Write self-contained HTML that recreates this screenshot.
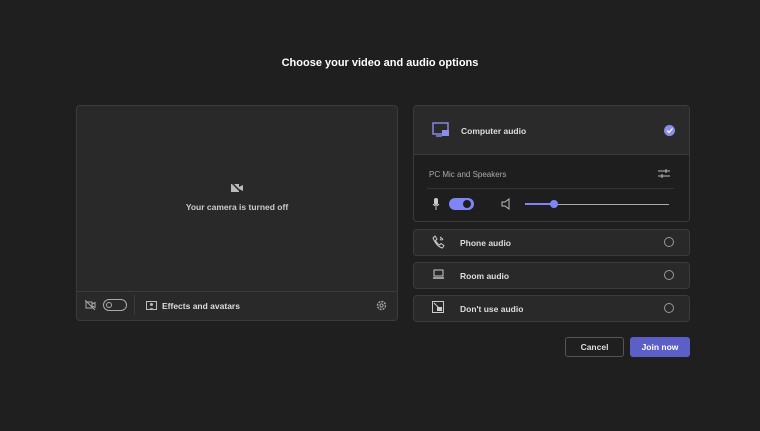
<!DOCTYPE html>
<html><head><style>
*{margin:0;padding:0;box-sizing:border-box}
body{width:760px;height:431px;background:#1f1f1f;font-family:"Liberation Sans",sans-serif;color:#fff;position:relative;overflow:hidden}
.a{position:absolute}
h1{position:absolute;top:57px;left:0;width:760px;text-align:center;font-size:11px;font-weight:bold;color:#fff}
.panel{background:#292929;border:1px solid #3b3b3b;border-radius:4px}
.t{font-size:8.5px;font-weight:bold;color:#ddd}
.radio{width:10px;height:10px;border:1px solid #999;border-radius:50%}
</style></head><body>
<h1>Choose your video and audio options</h1>
<div class="a panel" style="left:76px;top:105px;width:322px;height:216px"></div>
<div class="a" style="left:77px;top:291px;width:320px;height:1px;background:#3b3b3b"></div>
<svg class="a" style="left:230px;top:182px" width="14" height="12" viewBox="0 0 14 12"><rect x="1" y="2" width="8" height="8" fill="#bbb"/><path d="M9 5l4-2v6l-4-2z" fill="#bbb"/><path d="M1 0l12 12" stroke="#292929" stroke-width="1.5"/></svg>
<div class="a t" style="left:76px;top:202px;width:322px;text-align:center;color:#ccc">Your camera is turned off</div>
<svg class="a" style="left:85px;top:300px" width="11" height="10" viewBox="0 0 11 10"><rect x="1" y="2" width="6" height="6" fill="none" stroke="#aaa"/><path d="M7 4l3-1.5v5L7 6z" fill="none" stroke="#aaa"/><path d="M0 0l10 10" stroke="#aaa"/></svg>
<div class="a" style="left:103px;top:299px;width:24px;height:12px;border:1px solid #aaa;border-radius:6px"></div>
<div class="a" style="left:106px;top:302px;width:6px;height:6px;border:1px solid #aaa;border-radius:50%"></div>
<div class="a" style="left:134px;top:295px;width:1px;height:20px;background:#3b3b3b"></div>
<svg class="a" style="left:146px;top:300px" width="11" height="10" viewBox="0 0 11 10"><rect x=".5" y="1.5" width="10" height="8" fill="none" stroke="#bbb"/><circle cx="5.5" cy="4.5" r="1.5" fill="#bbb"/><path d="M3 9.5q2.5-3 5 0" fill="#bbb"/></svg>
<div class="a t" style="left:162px;top:301px">Effects and avatars</div>
<svg class="a" style="left:376px;top:300px" width="11" height="11" viewBox="0 0 11 11"><circle cx="5.5" cy="5.5" r="4" fill="none" stroke="#aaa" stroke-width="1.4" stroke-dasharray="2 1.1"/><circle cx="5.5" cy="5.5" r="1.6" fill="none" stroke="#aaa"/></svg>

<div class="a" style="left:413px;top:105px;width:277px;height:117px;background:#1e1e1e;border:1px solid #3b3b3b;border-radius:4px"></div>
<div class="a" style="left:414px;top:106px;width:275px;height:49px;background:#2a2a2a;border-bottom:1px solid #3b3b3b;border-radius:3px 3px 0 0"></div>
<svg class="a" style="left:432px;top:122px" width="18" height="16" viewBox="0 0 18 16"><rect x="1" y="1" width="15" height="11" fill="none" stroke="#8b8ee8" stroke-width="1.4"/><path d="M4 14h6" stroke="#8b8ee8" stroke-width="1.4"/><rect x="10" y="8" width="7" height="6" fill="#8b8ee8"/></svg>
<div class="a t" style="left:461px;top:126px">Computer audio</div>
<div class="a" style="left:664px;top:125px;width:11px;height:11px;border-radius:50%;background:#8b8ee8"></div>
<svg class="a" style="left:664px;top:125px" width="11" height="11"><path d="M3 5.5l2 2 3.5-4" stroke="#fff" fill="none" stroke-width="1.2"/></svg>
<div class="a" style="left:429px;top:170px;font-size:8px;color:#aaa">PC Mic and Speakers</div>
<svg class="a" style="left:658px;top:168px" width="12" height="11"><path d="M0 3h12M0 8h12" stroke="#bbb"/><path d="M8 1v4M4 6v4" stroke="#bbb"/></svg>
<div class="a" style="left:427px;top:188px;width:247px;height:1px;background:#333"></div>
<svg class="a" style="left:432px;top:198px" width="8" height="12"><rect x="2" y="0" width="4" height="7" rx="2" fill="#ccc"/><path d="M1 6q3 4 6 0M4 9v3" stroke="#ccc" fill="none"/></svg>
<div class="a" style="left:449px;top:198px;width:25px;height:12px;border-radius:6px;background:#7f85f5"></div>
<div class="a" style="left:463px;top:200px;width:8px;height:8px;border-radius:50%;background:#1e1e1e"></div>
<svg class="a" style="left:501px;top:198px" width="11" height="12"><path d="M1 4h3l4-3v10l-4-3H1z" fill="none" stroke="#bbb"/></svg>
<div class="a" style="left:525px;top:203px;width:28px;height:2px;background:#7f85f5"></div>
<div class="a" style="left:553px;top:203.5px;width:116px;height:1px;background:#aaa"></div>
<div class="a" style="left:550px;top:200px;width:8px;height:8px;border-radius:50%;background:#7f85f5"></div>

<div class="a panel" style="left:413px;top:229px;width:277px;height:27px"></div>
<div class="a panel" style="left:413px;top:262px;width:277px;height:27px"></div>
<div class="a panel" style="left:413px;top:295px;width:277px;height:27px"></div>
<svg class="a" style="left:432px;top:235px" width="13" height="14" viewBox="0 0 13 14"><path d="M3 1l2 3-1.5 1.5q1.5 3 4 4.5L9 8.5l3 2-1.5 2.5Q5 12 1 3z" fill="none" stroke="#ccc"/><path d="M8 2q2 1 3 3M8 4q1 .5 1.5 1.5" stroke="#ccc" fill="none"/></svg>
<svg class="a" style="left:432px;top:268px" width="13" height="13" viewBox="0 0 13 13"><path d="M2 2h9v6H2z" fill="none" stroke="#ccc" stroke-linejoin="round"/><path d="M1 10h11" stroke="#ccc" stroke-width="1.4"/></svg>
<svg class="a" style="left:432px;top:301px" width="12" height="12" viewBox="0 0 12 12"><rect x=".5" y=".5" width="11" height="11" fill="none" stroke="#ccc"/><path d="M2 2l8 8" stroke="#ccc"/><rect x="5" y="6" width="5" height="4" fill="#ccc"/></svg>
<div class="a t" style="left:460px;top:238px">Phone audio</div>
<div class="a t" style="left:460px;top:271px">Room audio</div>
<div class="a t" style="left:460px;top:304px">Don't use audio</div>
<div class="a radio" style="left:664px;top:237px"></div>
<div class="a radio" style="left:664px;top:270px"></div>
<div class="a radio" style="left:664px;top:303px"></div>

<div class="a" style="left:565px;top:337px;width:59px;height:20px;border:1px solid #555;border-radius:3px;background:#1f1f1f;font-size:8.5px;font-weight:bold;text-align:center;line-height:18px;color:#ddd">Cancel</div>
<div class="a" style="left:630px;top:337px;width:60px;height:20px;border-radius:3px;background:#5b5fc7;font-size:8.5px;font-weight:bold;text-align:center;line-height:20px;color:#fff">Join now</div>
</body></html>
